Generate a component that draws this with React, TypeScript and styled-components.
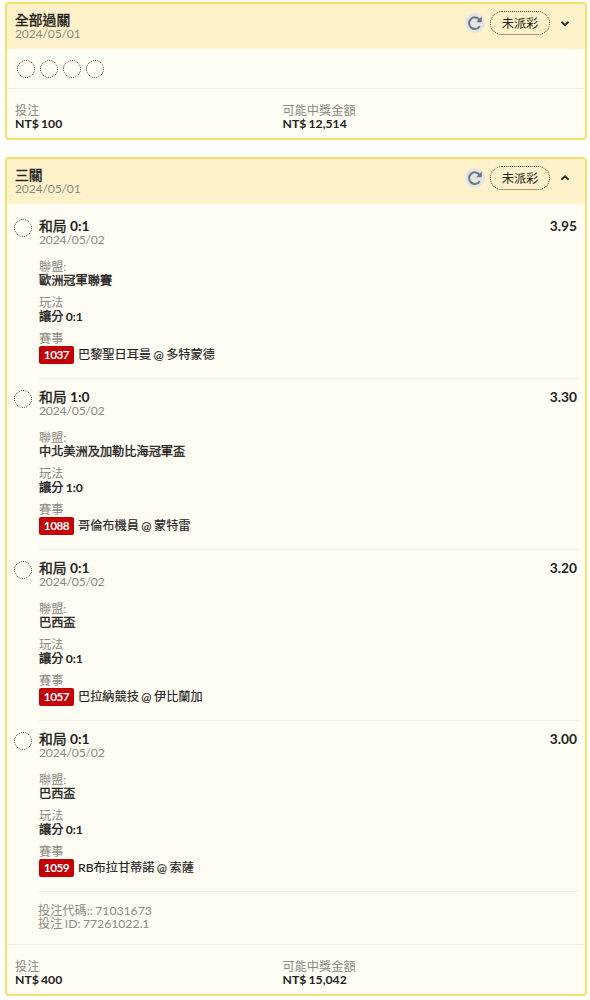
import React from "react";
import styled, { createGlobalStyle } from "styled-components";

const GlobalStyle = createGlobalStyle`
  * { box-sizing: border-box; }
  body {
    margin: 0;
    background: #fff;
    font-family: Lato, "Noto Sans CJK TC", sans-serif;
    font-size: 12.2px;
    line-height: 14px;
    color: #24221e;
    word-spacing: -0.7px;
  }
`;

const Page = styled.main`
  display: flex;
  flex-direction: column;
  gap: 17px;
  padding: 2px 3px 0 5px;
  width: 590px;
  height: 1000px;
`;

const Card = styled.section<{ $height: number }>`
  display: flex;
  flex-direction: column;
  height: ${(p) => p.$height}px;
  border: 2px solid #f3e16a;
  border-radius: 4px;
  background: #fffdf4;
  overflow: hidden;
`;

const CardHeader = styled.header`
  display: flex;
  align-items: flex-start;
  justify-content: space-between;
  height: 45px;
  flex: none;
  padding: 7px 15px 0 8px;
  background: #fff1c9;
`;

const HeaderText = styled.div`
  padding-top: 1px;
`;

const Title = styled.div`
  font-size: 13.8px;
  line-height: 15px;
  height: 15px;
  font-weight: 400;
  -webkit-text-stroke: 0.4px currentColor;
  word-spacing: 0;
  white-space: pre;
`;

const Score = styled.b`
  font-weight: 700;
  -webkit-text-stroke: 0;
`;

const Muted = styled.div`
  color: #8d8b85;
  white-space: pre;
  height: 14px;
`;

const DateText = styled(Muted)`
  letter-spacing: -0.2px;
`;

const Strong = styled.div`
  font-weight: 400;
  -webkit-text-stroke: 0.35px currentColor;
  white-space: pre;
  height: 14px;
`;

const Amount = styled(Strong)`
  font-weight: 700;
  -webkit-text-stroke: 0;
  margin-top: -1px;
`;

const Actions = styled.div`
  display: flex;
  align-items: center;
  height: 24px;
`;

const Refresh = styled.span`
  display: grid;
  place-items: center;
  width: 20px;
  height: 20px;
  margin-right: 5px;
  border-radius: 50%;
  background: #e4e4e2;
`;

const Status = styled.span`
  display: grid;
  place-items: center;
  width: 60px;
  height: 24px;
  padding-top: 2px;
  margin-right: 10px;
  border: 1px dotted #4a4638;
  border-radius: 12px;
`;

const Circles = styled.div`
  display: flex;
  gap: 5px;
  height: 40px;
  flex: none;
  padding: 11px 0 0 10px;
  border-bottom: 1px solid #f3efe8;
`;

const Circle = styled.span`
  flex: none;
  width: 18px;
  height: 18px;
  border: 1px dotted #35322d;
  border-radius: 50%;
`;

const Footer = styled.footer`
  display: flex;
  padding: 15px 8px 0;
`;

const FooterCell = styled.div`
  width: 267.5px;
`;

const Legs = styled.div`
  flex: none;
  padding: 4px 6px 0 7px;
`;

const Leg = styled.article`
  display: flex;
  gap: 7px;
  height: 171px;
`;

const LegCircle = styled(Circle)`
  margin-top: 10.5px;
`;

const LegBody = styled.div`
  flex: 1;
  padding-top: 10px;
  border-bottom: 1px solid #f0ede5;
`;

const LegTop = styled.div`
  display: flex;
  justify-content: space-between;
  padding-right: 2px;
`;

const Field = styled.div<{ $first?: boolean }>`
  margin-top: ${(p) => (p.$first ? 13.4 : 8)}px;
`;

const Match = styled.div`
  display: flex;
  align-items: center;
  gap: 4px;
  height: 18px;
  white-space: pre;
  -webkit-text-stroke: 0.15px currentColor;
`;

const Code = styled.span`
  width: 35px;
  height: 18px;
  border-radius: 2px;
  background: #c20006;
  color: #fff;
  text-align: center;
  font-weight: 700;
  font-size: 11.8px;
  line-height: 18px;
  letter-spacing: -0.5px;
  -webkit-text-stroke: 0;
`;

const Meta = styled.div`
  flex: none;
  height: 53px;
  padding: 12px 0 0 31px;
  border-bottom: 1px solid #f3efe8;
  line-height: 13px;
  ${Muted} { height: 13px; }
`;

const legs = [
  { score: "0:1", odds: "3.95", league: "歐洲冠軍聯賽", code: "1037", match: "巴黎聖日耳曼 @ 多特蒙德" },
  { score: "1:0", odds: "3.30", league: "中北美洲及加勒比海冠軍盃", code: "1088", match: "哥倫布機員 @ 蒙特雷" },
  { score: "0:1", odds: "3.20", league: "巴西盃", code: "1057", match: "巴拉納競技 @ 伊比蘭加" },
  { score: "0:1", odds: "3.00", league: "巴西盃", code: "1059", match: "RB布拉甘蒂諾 @ 索薩" },
];

function Header({ title, open }: { title: string; open?: boolean }) {
  return (
    <CardHeader>
      <HeaderText>
        <Title>{title}</Title>
        <DateText>2024/05/01</DateText>
      </HeaderText>
      <Actions>
        <Refresh>
          <svg width="16" height="16" viewBox="0 0 16 16" fill="none">
            <path d="M12.6 4.8A5.8 5.8 0 1 0 12.8 11.2" stroke="#6d7483" strokeWidth="2" />
            <path d="M14.8 1.6V7.2H9.2z" fill="#6d7483" />
          </svg>
        </Refresh>
        <Status>未派彩</Status>
        <svg width="10" height="10" viewBox="0 0 10 10" fill="none">
          <path d={open ? "M1.4 6.8L5 3.4L8.6 6.8" : "M1.4 3.8L5 7.2L8.6 3.8"} stroke="#2b2820" strokeWidth="1.9" />
        </svg>
      </Actions>
    </CardHeader>
  );
}

function Totals({ stake, win }: { stake: string; win: string }) {
  return (
    <Footer>
      <FooterCell>
        <Muted>投注</Muted>
        <Amount>{stake}</Amount>
      </FooterCell>
      <FooterCell>
        <Muted>可能中獎金額</Muted>
        <Amount>{win}</Amount>
      </FooterCell>
    </Footer>
  );
}

export default function App() {
  return (
    <Page>
      <GlobalStyle />
      <Card $height={138}>
        <Header title="全部過關" />
        <Circles>
          {legs.map((l) => (
            <Circle key={l.code} />
          ))}
        </Circles>
        <Totals stake="NT$ 100" win="NT$ 12,514" />
      </Card>
      <Card $height={839}>
        <Header title="三關" open />
        <Legs>
          {legs.map((l) => (
            <Leg key={l.code}>
              <LegCircle />
              <LegBody>
                <LegTop>
                  <Title>和局<Score> {l.score}</Score></Title>
                  <Title><Score>{l.odds}</Score></Title>
                </LegTop>
                <DateText>2024/05/02</DateText>
                <Field $first>
                  <Muted>聯盟:</Muted>
                  <Strong>{l.league}</Strong>
                </Field>
                <Field>
                  <Muted>玩法</Muted>
                  <Strong>讓分<Score> {l.score}</Score></Strong>
                </Field>
                <Field>
                  <Muted>賽事</Muted>
                  <Match>
                    <Code>{l.code}</Code>
                    <span>{l.match}</span>
                  </Match>
                </Field>
              </LegBody>
            </Leg>
          ))}
        </Legs>
        <Meta>
          <Muted>投注代碼:: 71031673</Muted>
          <Muted>投注 ID: 77261022.1</Muted>
        </Meta>
        <Totals stake="NT$ 400" win="NT$ 15,042" />
      </Card>
    </Page>
  );
}
